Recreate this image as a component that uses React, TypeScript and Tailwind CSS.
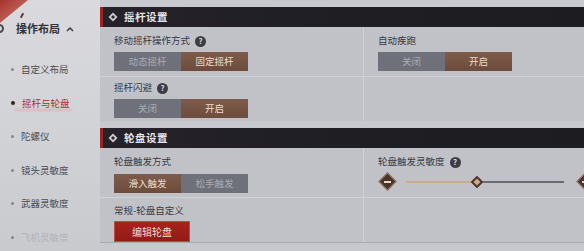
import type { ReactNode } from "react";

const FONT = "font-['Noto_Sans_CJK_SC','Noto_Sans',sans-serif]";

function Help() {
  return (
    <span className="inline-flex h-[11px] w-[11px] items-center justify-center rounded-full bg-[#3b3c44] text-[8px] font-bold leading-none text-[#d8d8dc]">
      ?
    </span>
  );
}

function Label({ children, help }: { children: ReactNode; help?: boolean }) {
  return (
    <div className="flex h-[14px] items-center gap-[5px] text-[9.5px] leading-none text-[#383940]">
      <span>{children}</span>
      {help && <Help />}
    </div>
  );
}

function Segmented({ options, active }: { options: string[]; active: number }) {
  return (
    <div className="flex h-[19px]">
      {options.map((o, i) =>
        i === active ? (
          <div
            key={o}
            className="flex w-[67px] items-center justify-center bg-gradient-to-b from-[#7d5c4b] to-[#6d4c3d] text-[9.5px] text-[#eadfd6]"
          >
            {o}
          </div>
        ) : (
          <div
            key={o}
            className="flex w-[67px] items-center justify-center bg-[#6f717a] text-[9.5px] text-[#a9abb2]"
          >
            {o}
          </div>
        )
      )}
    </div>
  );
}

function SectionHeader({ title }: { title: string }) {
  return (
    <div className="flex h-[20px] items-center bg-gradient-to-r from-[#26222a] via-[#1e1e23] to-[#1c1c21]">
      <div className="h-full w-[3px] bg-[#9a2422]" />
      <svg width="10" height="10" viewBox="0 0 10 10" className="ml-[5px]">
        <path d="M5 0.5 L9.5 5 L5 9.5 L0.5 5 Z" fill="#cfcfd2" />
        <path d="M5 3 L7 5 L5 7 L3 5 Z" fill="#2a2a30" />
      </svg>
      <span className="ml-[6px] text-[10.5px] font-bold tracking-[0.5px] text-[#e4e4e8]">{title}</span>
    </div>
  );
}

function Diamond({ sign }: { sign: "-" | "+" }) {
  return (
    <div className="relative flex h-[19px] w-[19px] items-center justify-center">
      <div className="absolute h-[13px] w-[13px] rotate-45 border border-[#9a8272] bg-[#4b3328]" />
      <div className="relative h-[2px] w-[7px] bg-[#e2d6cc]" />
      {sign === "+" && <div className="absolute h-[7px] w-[2px] bg-[#e2d6cc]" />}
    </div>
  );
}

function Slider({ value }: { value: number }) {
  return (
    <div className="flex h-[19px] items-center">
      <Diamond sign="-" />
      <div className="relative ml-[9px] h-[2px] w-[158px] bg-[#696b74]">
        <div className="absolute left-0 top-0 h-[2px] bg-[#c9aa8c]" style={{ width: `${value}%` }} />
        <div
          className="absolute top-1/2 h-[9px] w-[9px] -translate-x-1/2 -translate-y-1/2 rotate-45 border-[2px] border-[#4b3328] bg-[#c9aa8c]"
          style={{ left: `${value}%` }}
        />
      </div>
      <div className="ml-[12px]">
        <Diamond sign="+" />
      </div>
    </div>
  );
}

const navItems = ["自定义布局", "摇杆与轮盘", "陀螺仪", "镜头灵敏度", "武器灵敏度", "飞机灵敏度"];

function Sidebar() {
  return (
    <div className="relative h-full w-[100px] shrink-0 overflow-hidden bg-gradient-to-b from-[#dadade] via-[#d2d3d7] to-[#c9cace]">
      <svg width="32" height="26" viewBox="0 0 32 26" className="absolute left-0 top-0">
        <defs>
          <linearGradient id="corner" x1="0" y1="0" x2="1" y2="1">
            <stop offset="0" stopColor="#a9302a" />
            <stop offset="1" stopColor="#c0564c" stopOpacity="0.7" />
          </linearGradient>
        </defs>
        <path d="M0 0 L28 0 L0 23 Z" fill="url(#corner)" />
      </svg>
      <div className="absolute left-[21px] top-[13px] h-[5px] w-[2px] rotate-[30deg] bg-[#5a3a36]" />
      <div className="relative flex items-center pt-[23px]">
        <div className="ml-[-5px] h-[9px] w-[9px] rounded-full border-[2px] border-[#4a4b52]" />
        <span className="ml-[12px] text-[11px] font-bold leading-none text-[#33343a]">操作布局</span>
        <svg width="8" height="6" viewBox="0 0 8 6" className="ml-[6px]">
          <path d="M1 5 L4 2 L7 5" stroke="#3a3b42" strokeWidth="1.5" fill="none" />
        </svg>
      </div>
      <div className="relative mt-[19px] flex flex-col">
        {navItems.map((item, i) => {
          const active = i === 1;
          const faded = i === navItems.length - 1;
          return (
            <div key={item} className="relative flex h-[33.5px] items-center">
              <span
                className={
                  active
                    ? "ml-[11px] h-[4px] w-[4px] rounded-full bg-[#3a1e1e]"
                    : "ml-[11px] h-[3px] w-[3px] rounded-full bg-[#85868d]"
                }
              />
              <span
                className={
                  active
                    ? "ml-[7px] text-[9.5px] leading-none text-[#a8302c]"
                    : faded
                      ? "ml-[7px] text-[9.5px] leading-none text-[#b3b4ba]"
                      : "ml-[7px] text-[9.5px] leading-none text-[#4b4c53]"
                }
              >
                {item}
              </span>
              {active && (
                <div className="absolute left-[14px] top-[22px] h-[2px] w-[58px] rounded-full bg-[#d98c86] opacity-40 blur-[1px]" />
              )}
            </div>
          );
        })}
      </div>
    </div>
  );
}

function Row({ left, right, height }: { left: ReactNode; right?: ReactNode; height: string }) {
  return (
    <div className={`flex border-b border-[#d0d1d6] ${height}`}>
      <div className="w-[264px] shrink-0 border-r border-[#d0d1d6] pl-[14px] pt-[7px]">{left}</div>
      <div className="w-[240px] shrink-0 pl-[14px] pt-[7px]">{right}</div>
    </div>
  );
}

export default function App() {
  return (
    <div className={`flex h-[251px] w-[584px] overflow-hidden bg-[#c8c9ce] ${FONT}`}>
      <Sidebar />
      <div className="flex min-w-0 flex-1 flex-col overflow-hidden pt-[7px]">
        <div className="w-[520px] bg-[#c1c2c8]">
          <SectionHeader title="摇杆设置" />
          <Row
            height="h-[50px]"
            left={
              <div className="flex flex-col gap-[4px]">
                <Label help>移动摇杆操作方式</Label>
                <Segmented options={["动态摇杆", "固定摇杆"]} active={1} />
              </div>
            }
            right={
              <div className="flex flex-col gap-[4px]">
                <Label>自动疾跑</Label>
                <Segmented options={["关闭", "开启"]} active={1} />
              </div>
            }
          />
          <div className="flex h-[44px]">
            <div className="w-[264px] shrink-0 border-r border-[#d0d1d6] pl-[14px] pt-[4px]">
              <div className="flex flex-col gap-[4px]">
                <Label help>摇杆闪避</Label>
                <Segmented options={["关闭", "开启"]} active={1} />
              </div>
            </div>
            <div className="w-[240px] shrink-0" />
          </div>
        </div>
        <div className="h-[7px]" />
        <div className="w-[520px] bg-[#c1c2c8]">
          <SectionHeader title="轮盘设置" />
          <Row
            height="h-[50px]"
            left={
              <div className="flex flex-col gap-[5px]">
                <Label>轮盘触发方式</Label>
                <Segmented options={["滑入触发", "松手触发"]} active={0} />
              </div>
            }
            right={
              <div className="flex flex-col gap-[3px]">
                <Label help>轮盘触发灵敏度</Label>
                <Slider value={45} />
              </div>
            }
          />
          <div className="flex h-[45px] border-b border-[#a9aab0]">
            <div className="w-[264px] shrink-0 border-r border-[#d0d1d6] pl-[14px] pt-[6px]">
              <div className="flex flex-col gap-[3px]">
                <Label>常规-轮盘自定义</Label>
                <button
                  type="button"
                  className="flex h-[21px] w-[76px] items-center justify-center border border-[#c24a42] bg-gradient-to-b from-[#a8231e] to-[#941a17] text-[10px] text-[#f0d8d4]"
                >
                  编辑轮盘
                </button>
              </div>
            </div>
            <div className="w-[240px] shrink-0" />
          </div>
        </div>
      </div>
    </div>
  );
}
